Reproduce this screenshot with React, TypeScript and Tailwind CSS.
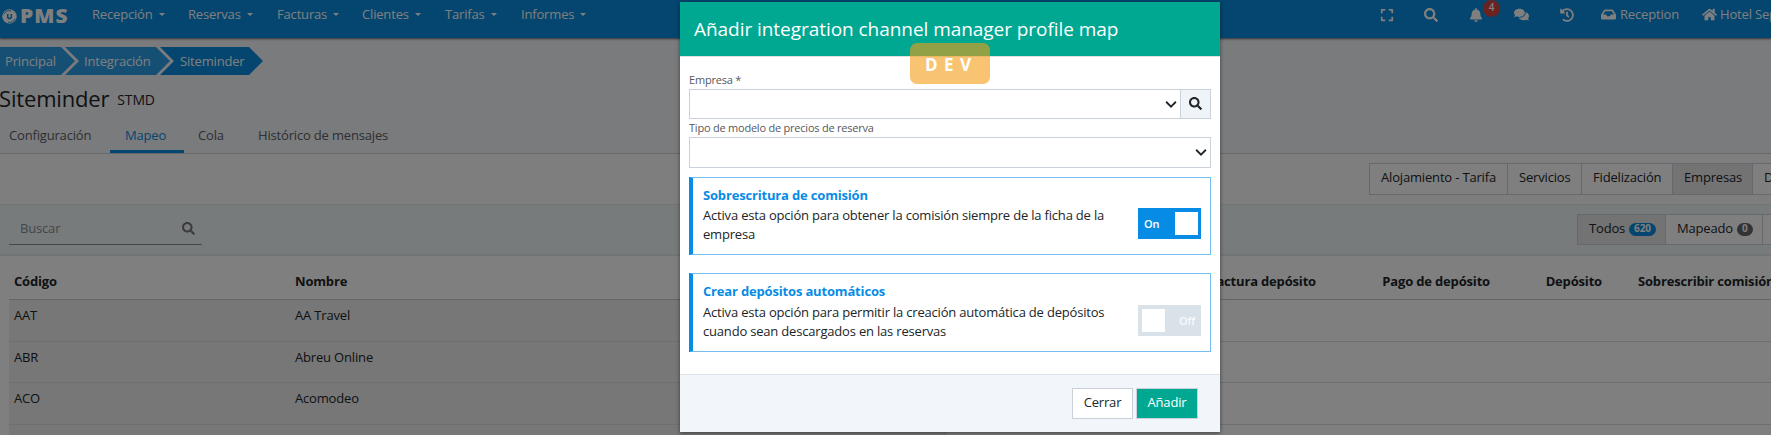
import React from "react";
import {
  FaBell,
  FaComments,
  FaExpand,
  FaHistory,
  FaHome,
  FaInbox,
  FaSearch,
} from "react-icons/fa";

const menu = [
  { label: "Recepción", width: "w-[96px]" },
  { label: "Reservas", width: "w-[89px]" },
  { label: "Facturas", width: "w-[85px]" },
  { label: "Clientes", width: "w-[83px]" },
  { label: "Tarifas", width: "w-[76px]" },
  { label: "Informes", width: "w-[90px]" },
];

const rows = [
  { code: "AAT", name: "AA Travel" },
  { code: "ABR", name: "Abreu Online" },
  { code: "ACO", name: "Acomodeo" },
  { code: "", name: "" },
];

function Logo() {
  return (
    <div className="flex h-[29px] w-[92px] shrink-0 items-center pl-[2px] pt-[3px] text-white">
      <svg viewBox="0 0 15 15" className="size-[15px] shrink-0">
        <circle cx="7.5" cy="7.5" r="7.2" fill="currentColor" />
        <path
          d="M2 5.200A6 6 0 0 1 9 1.900M13 9.800A6 6 0 0 1 6 13.100"
          fill="none"
          stroke="#088cde"
          strokeWidth="0.9"
        />
        <path
          d="M5.700 5v2.800a1.800 1.800 0 0 0 3.600 0V5"
          fill="none"
          stroke="#088cde"
          strokeWidth="1.500"
        />
      </svg>
      <span className="ml-[3px] origin-left scale-x-110 text-[19px] leading-none font-extrabold tracking-[1px]">PMS</span>
    </div>
  );
}

function NavBar() {
  return (
    <header className="relative flex h-[38px] w-full shrink-0 items-start overflow-visible bg-[#088cde] text-white shadow-[0_1px_2px_rgba(0,0,0,0.6)]">
      <Logo />
      <nav className="flex h-[29px] items-center">
        {menu.map((m) => (
          <div key={m.label} className={`flex shrink-0 items-center ${m.width}`}>
            <span>{m.label}</span>
            <span className="ml-[6px] border-x-[3px] border-t-[3px] border-x-transparent border-t-white" />
          </div>
        ))}
      </nav>
      <div className="ml-auto flex h-[29px] w-[391px] shrink-0 items-center overflow-hidden whitespace-nowrap">
        <div className="flex w-[44px] shrink-0 text-[14px]"><FaExpand /></div>
        <div className="flex w-[44px] shrink-0 text-[14px]"><FaSearch /></div>
        <div className="relative flex w-[46px] shrink-0 pl-[1px] text-[14px]">
          <FaBell />
          <span className="absolute -top-[8px] left-[15px] flex size-[17px] items-center justify-center rounded-full bg-[#d9453c] text-[10px] font-semibold">
            4
          </span>
        </div>
        <div className="flex w-[46px] shrink-0 text-[15px]"><FaComments /></div>
        <div className="flex w-[41px] shrink-0 text-[14px]"><FaHistory /></div>
        <div className="flex w-[101px] shrink-0 items-center gap-[4px]">
          <FaInbox className="text-[15px]" />
          <span>Reception</span>
        </div>
        <div className="flex shrink-0 items-center gap-[3px]">
          <FaHome className="text-[15px]" />
          <span>Hotel September</span>
        </div>
      </div>
    </header>
  );
}

function Breadcrumb() {
  return (
    <div className="mt-[9px] flex h-[28px] shrink-0 text-white [&>*]:pt-[1px]">
      <div className="flex w-[75px] items-center bg-[#2c9ee8] pl-[5px] [clip-path:polygon(0_0,61px_0,100%_50%,61px_100%,0_100%)]">
        Principal
      </div>
      <div className="-ml-[10px] flex w-[105px] items-center bg-[#2c9ee8] pl-[19px] [clip-path:polygon(0_0,91px_0,100%_50%,91px_100%,0_100%,14px_50%)]">
        Integración
      </div>
      <div className="-ml-[10px] flex w-[103px] items-center bg-[#088cde] pl-[20px] [clip-path:polygon(0_0,89px_0,100%_50%,89px_100%,0_100%,14px_50%)]">
        Siteminder
      </div>
    </div>
  );
}

function Page() {
  return (
    <div className="flex h-full w-full flex-col overflow-hidden bg-[#f5f6fb] text-[#212529]">
      <NavBar />
      <Breadcrumb />
      <h1 className="-ml-[1px] mt-[6px] flex h-[34px] shrink-0 items-center leading-none">
        <span className="text-[22px]">Siteminder</span>
        <span className="ml-[8px] mt-[4px] text-[14px]">STMD</span>
      </h1>
      <div className="flex h-[39px] shrink-0 items-stretch border-b border-[#cdd0d6] text-[#5a5e64] [&>*]:pt-[4px]">
        <div className="flex w-[110px] items-center pl-[9px]">Configuración</div>
        <div className="flex w-[74px] items-center border-b-[3px] border-[#088cde] pl-[15px] text-[#088cde]">
          <span className="mt-[3px]">Mapeo</span>
        </div>
        <div className="flex w-[74px] items-center pl-[14px]">Cola</div>
        <div className="flex items-center">Histórico de mensajes</div>
      </div>
      <div className="flex h-[51px] shrink-0 items-start justify-end border-b border-[#e5e7ea] bg-[#fcfdff] pt-[9px]">
        <div className="flex h-[32px] w-[402px] items-stretch overflow-hidden border border-r-0 border-[#cbd1da] bg-white whitespace-nowrap [&>*]:flex [&>*]:shrink-0 [&>*]:items-center [&>*]:border-r [&>*]:border-[#cbd1da] [&>*]:pb-[2px] [&>*]:pl-[11px]">
          <div className="w-[138px]">Alojamiento - Tarifa</div>
          <div className="w-[74px]">Servicios</div>
          <div className="w-[91px]">Fidelización</div>
          <div className="w-[80px] bg-[#e6e6e6]">Empresas</div>
          <div className="w-[90px]">Depósitos</div>
        </div>
      </div>
      <div className="flex h-[51px] shrink-0 items-start justify-between border-b-2 border-[#e4e9ea] bg-[#eef6f8] pt-[9px]">
        <div className="ml-[9px] flex h-[31px] w-[193px] items-center justify-between border-b border-[#8c8f92] pr-[7px] pl-[11px] text-[#888d92]">
          <span>Buscar</span>
          <FaSearch className="mb-[2px] text-[13px] text-[#777]" />
        </div>
        <div className="flex h-[31px] w-[194px] items-stretch overflow-hidden border border-r-0 border-[#cbd1da] bg-white whitespace-nowrap [&>*]:flex [&>*]:shrink-0 [&>*]:items-center [&>*]:gap-[4px] [&>*]:border-r [&>*]:border-[#cbd1da] [&>*]:pb-[1px] [&>*]:pl-[11px]">
          <div className="w-[88px] bg-[#e6e6e6]">
            Todos
            <span className="flex h-[13px] items-center rounded-full bg-[#088cde] px-[5px] text-[10px] font-bold text-white">620</span>
          </div>
          <div className="w-[97px]">
            Mapeado
            <span className="flex h-[13px] items-center rounded-full bg-[#666] px-[5px] text-[10px] font-bold text-white">0</span>
          </div>
          <div className="w-[97px]" />
        </div>
      </div>
      <div className="flex h-[180px] shrink-0 flex-col bg-white pl-[9px]">
        <div className="flex h-[44px] shrink-0 items-center border-b border-[#c9cbce] pt-[8px] font-bold whitespace-nowrap [&>*]:shrink-0">
          <span className="w-[281px] pl-[5px]">Código</span>
          <span className="w-[655px] pl-[5px]">Nombre</span>
          <span className="w-[371px] text-right">Factura depósito</span>
          <span className="w-[174px] text-right">Pago de depósito</span>
          <span className="w-[112px] text-right">Depósito</span>
          <span className="pl-[36px]">Sobrescribir comisión</span>
        </div>
        {rows.map((r, i) => (
          <div key={i} className="flex h-[41.7px] shrink-0 border-b border-[#dcdee0]">
            <div className="w-[281px] bg-[#eeeeee] pt-[6px] pl-[5px]">{r.code}</div>
            <div className="w-[656px] border-r border-[#dcdee0] bg-[#eeeeee] pt-[6px] pl-[5px]">{r.name}</div>
          </div>
        ))}
      </div>
    </div>
  );
}

function Chevron() {
  return (
    <svg viewBox="0 0 16 16" className="size-[12px]" fill="none" stroke="#212529" strokeWidth="2.4">
      <path d="m1.5 5 6.5 6.5L14.500 5" />
    </svg>
  );
}

function Toggle({ on }: { on: boolean }) {
  return on ? (
    <div className="flex h-[31px] w-[63px] shrink-0 items-center justify-between bg-[#078ce6] pr-[3px] pl-[6px] text-[11px] font-semibold text-white">
      <span>On</span>
      <span className="size-[23px] bg-white" />
    </div>
  ) : (
    <div className="mt-[1px] flex h-[31px] w-[63px] shrink-0 items-center justify-between bg-[#d8e2e8] pr-[6px] pl-[4px] text-[11px] font-semibold text-[#f8fafc]">
      <span className="size-[23px] bg-white" />
      <span>Off</span>
    </div>
  );
}

function OptionCard({ title, text, on }: { title: string; text: string; on: boolean }) {
  return (
    <div className="flex h-[79px] items-start justify-between border border-l-4 border-[#74bdee] border-l-[#078ce6] pl-[10px] pr-[9px] first:h-[78px]">
      <div className="w-[415px] pt-[7px]">
        <div className={`leading-[20px] font-bold text-[#078ce6] ${on ? "mb-[1px]" : "mb-[2px]"}`}>{title}</div>
        <p className="w-[408px] leading-[19px] tracking-[-0.19px]">{text}</p>
      </div>
      <div className="mt-[30px]">
        <Toggle on={on} />
      </div>
    </div>
  );
}

function Modal() {
  return (
    <div className="mt-[2px] flex h-[430px] w-[540px] flex-col bg-white text-[#212529] shadow-[0_1px_4px_rgba(0,0,0,0.5)]">
      <div className="flex h-[55px] shrink-0 items-center border-b border-[#dee2e6] bg-[#00a892] pt-[2px] pl-[14px] text-[19px] tracking-[-0.05px] text-white">
        Añadir integration channel manager profile map
      </div>
      <div className="flex flex-1 flex-col px-[9px]">
        <label className="mt-[14px] h-[18px] text-[11px] leading-[18px] tracking-[-0.2px] text-[#55595c]">Empresa *</label>
        <div className="flex h-[30px] shrink-0 border border-[#cbd1da]">
          <div className="flex flex-1 items-center justify-end pr-[3px] pb-[1px]"><Chevron /></div>
          <div className="flex w-[30px] items-center justify-center border-l border-[#cbd1da] bg-[#eff4f8] pb-[1px]">
            <FaSearch className="text-[13px]" />
          </div>
        </div>
        <label className="h-[18px] text-[11px] leading-[18px] tracking-[-0.22px] text-[#55595c]">Tipo de modelo de precios de reserva</label>
        <div className="flex h-[31px] shrink-0 items-center justify-end border border-[#cbd1da] pr-[3px] pb-[1px]"><Chevron /></div>
        <div className="mt-[9px] flex flex-col gap-[18px]">
          <OptionCard
            on
            title="Sobrescritura de comisión"
            text="Activa esta opción para obtener la comisión siempre de la ficha de la empresa"
          />
          <OptionCard
            on={false}
            title="Crear depósitos automáticos"
            text="Activa esta opción para permitir la creación automática de depósitos cuando sean descargados en las reservas"
          />
        </div>
      </div>
      <div className="flex h-[58px] shrink-0 items-start justify-end gap-[3px] border-t border-[#dbe1e6] bg-[#f2f6fa] pt-[13px] pr-[22px]">
        <button className="flex h-[31px] w-[61px] items-center justify-center border border-[#cbd1da] bg-white pb-[2px]">Cerrar</button>
        <button className="flex h-[31px] w-[62px] items-center justify-center border border-[#cbd1da] bg-[#00a892] pb-[2px] text-white">Añadir</button>
      </div>
    </div>
  );
}

export default function App() {
  return (
    <div className="relative h-[435px] w-full overflow-hidden font-['Open_Sans',sans-serif] text-[13px] leading-[19.500px] tracking-[-0.17px]">
      <Page />
      <div className="absolute inset-0 flex items-start justify-center bg-black/50 pl-[129px]">
        <Modal />
      </div>
      <div className="absolute top-[43px] left-[910px] flex h-[41px] w-[80px] items-center rounded-[7px] bg-[#f39c12]/60 pt-[2px] pl-[15px] text-[17px] font-bold tracking-[6.500px] text-white">
        DEV
      </div>
    </div>
  );
}
